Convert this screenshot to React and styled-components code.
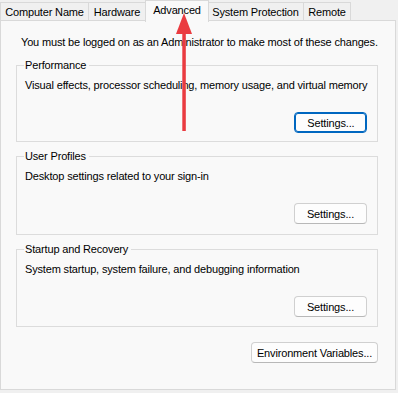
import React from "react";
import styled, { createGlobalStyle } from "styled-components";

const GlobalStyle = createGlobalStyle`
  body {
    margin: 0;
    background: #f0f0f0;
    font-family: "Liberation Sans", Arial, sans-serif;
    font-size: 11px;
    letter-spacing: -0.16px;
    color: #000;
  }
`;

const tabs = [
  { label: "Computer Name", width: 89 },
  { label: "Hardware", width: 57 },
  { label: "Advanced", width: 64, active: true },
  { label: "System Protection", width: 96 },
  { label: "Remote", width: 47 },
];

const groups = [
  {
    title: "Performance",
    text: "Visual effects, processor scheduling, memory usage, and virtual memory",
    focused: true,
    height: 84,
  },
  {
    title: "User Profiles",
    text: "Desktop settings related to your sign-in",
    height: 86,
  },
  {
    title: "Startup and Recovery",
    text: "System startup, system failure, and debugging information",
    height: 85,
  },
];

const App = () => {
  return (
    <Window>
      <GlobalStyle />
      <TabBar>
        {tabs.map((t) => (
          <Tab key={t.label} active={t.active} w={t.width}>
            {t.label}
          </Tab>
        ))}
      </TabBar>
      <Panel>
        <Notice>
          You must be logged on as an Administrator to make most of these changes.
        </Notice>
        {groups.map((g) => (
          <Group key={g.title} h={g.height}>
            <Legend>{g.title}</Legend>
            <GroupText>{g.text}</GroupText>
            <ButtonRow>
              <Button focused={g.focused}>Settings...</Button>
            </ButtonRow>
          </Group>
        ))}
        <FooterRow>
          <Button wide>Environment Variables...</Button>
        </FooterRow>
      </Panel>
      <Arrow width="20" height="120" viewBox="0 0 20 120">
        <rect x="8.3" y="16" width="3.5" height="102" fill="#ea3b40" />
        <polygon points="10,0 2,21 18,21" fill="#ea3b40" />
      </Arrow>
    </Window>
  );
};

//=================================
//       Styled-Component
//=================================

const Window = styled.div`
  position: relative;
  width: 398px;
  height: 393px;
  background: #f0f0f0;
  overflow: hidden;
`;

const TabBar = styled.div`
  display: flex;
  align-items: flex-end;
  height: 21px;
  position: relative;
  z-index: 1;
`;

const Tab = styled.div`
  box-sizing: border-box;
  width: ${(p) => p.w}px;
  height: ${(p) => (p.active ? "22px" : "19px")};
  margin: 0 ${(p) => (p.active ? "-1px" : "0")};
  margin-bottom: ${(p) => (p.active ? "-1px" : "0")};
  border: 1px solid #d9d9d9;
  border-bottom: ${(p) => (p.active ? "none" : "1px solid #d9d9d9")};
  border-left-width: ${(p) => (p.active ? "1px" : "0")};
  background: ${(p) => (p.active ? "#f9f9f9" : "#f0f0f0")};
  line-height: ${(p) => (p.active ? "19px" : "18px")};
  text-align: center;
  white-space: nowrap;
  z-index: ${(p) => (p.active ? 2 : 1)};
  &:first-child {
    border-left-width: 1px;
  }
`;

const Panel = styled.div`
  box-sizing: border-box;
  width: 396px;
  height: 370px;
  margin-top: -1px;
  background: #f9f9f9;
  border: 1px solid #d9d9d9;
  padding: 0 17px 0 15px;
  display: flex;
  flex-direction: column;
  white-space: nowrap;
`;

const Notice = styled.div`
  margin: 14px 0 8px 5px;
  line-height: 15px;
`;

const Group = styled.fieldset`
  box-sizing: border-box;
  height: ${(p) => p.h}px;
  margin: 0 0 7px 0;
  padding: 0 10px 0 8px;
  border: 1px solid #dcdcdc;
  display: flex;
  flex-direction: column;
`;

const Legend = styled.legend`
  padding: 0 3px 0 1px;
  margin-left: -1px;
  line-height: 14px;
`;

const GroupText = styled.div`
  margin-top: 6px;
  line-height: 15px;
`;

const ButtonRow = styled.div`
  display: flex;
  justify-content: flex-end;
  margin-top: 19px;
`;

const Button = styled.button`
  box-sizing: border-box;
  height: 21px;
  width: ${(p) => (p.wide ? "127px" : "73px")};
  padding: 0;
  font-family: inherit;
  font-size: 11px;
  letter-spacing: -0.16px;
  white-space: nowrap;
  color: #000;
  background: #fdfdfd;
  border: 1px solid ${(p) => (p.focused ? "#0067c0" : "#d0d0d0")};
  border-bottom-color: ${(p) => (p.focused ? "#0067c0" : "#b8b8b8")};
  box-shadow: ${(p) => (p.focused ? "inset 0 0 0 1px #0067c0" : "none")};
  border-radius: 4px;
  &:focus {
    outline: none;
  }
`;

const FooterRow = styled.div`
  display: flex;
  justify-content: flex-end;
  margin-top: 8px;
`;

const Arrow = styled.svg`
  position: absolute;
  left: 174px;
  top: 13px;
  z-index: 5;
`;

export default App;
